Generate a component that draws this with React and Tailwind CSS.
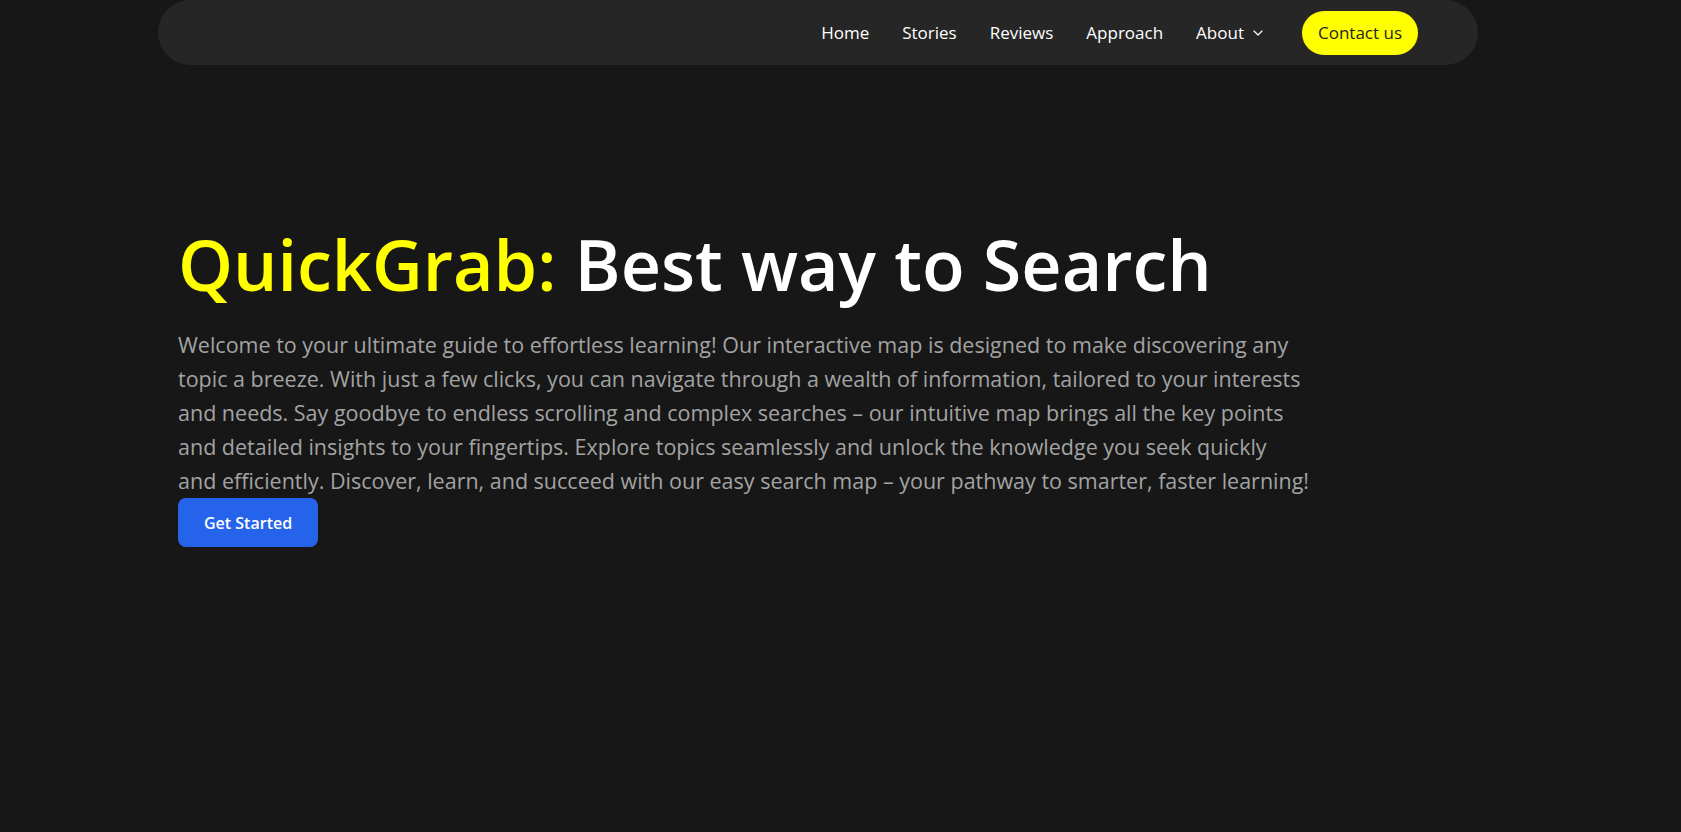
import React from 'react';
import { ChevronDown } from 'lucide-react';

const navLinks = ['Home', 'Stories', 'Reviews', 'Approach'];

const Navbar = () => (
  <div className="pl-[158px] pr-[203px]">
    <nav className="h-[65px] rounded-full bg-[#262626] flex items-center justify-end pr-[60px]">
      <ul className="flex items-center gap-[33px] text-[17px] text-white">
        {navLinks.map(link => (
          <li key={link}><a href="#" className="hover:text-yellow-300">{link}</a></li>
        ))}
        <li className="flex items-center gap-[6px]">
          <a href="#">About</a>
          <ChevronDown size={16} strokeWidth={1.8} />
        </li>
      </ul>
      <button className="ml-[36px] h-[44px] px-[16px] rounded-full bg-[#ffff00] text-[#1f1f1f] text-[17px]">
        Contact us
      </button>
    </nav>
  </div>
);

const Hero = () => (
  <section className="pl-[178px] pt-[164px]">
    <h1 className="text-[70px] leading-none font-semibold text-white">
      <span className="text-[#ffff00]">QuickGrab:</span> Best way to Search
    </h1>
    <p className="mt-[29px] max-w-[1140px] text-[21.5px] leading-[34px] text-[#a3a3a3]">
      Welcome to your ultimate guide to effortless learning! Our interactive map is designed to make discovering any topic a breeze. With just a few clicks, you can navigate through a wealth of information, tailored to your interests and needs. Say goodbye to endless scrolling and complex searches – our intuitive map brings all the key points and detailed insights to your fingertips. Explore topics seamlessly and unlock the knowledge you seek quickly and{'\u00a0'}efficiently. Discover, learn, and succeed with our easy search map – your pathway to smarter, faster learning!
    </p>
    <button className="h-[49px] px-[26px] rounded-lg bg-[#2563eb] text-white text-[16px] font-semibold">
      Get Started
    </button>
  </section>
);

export default function App() {
  return (
    <div className="min-h-screen bg-[#171717] font-['Open_Sans',sans-serif]">
      <Navbar />
      <Hero />
    </div>
  );
}
